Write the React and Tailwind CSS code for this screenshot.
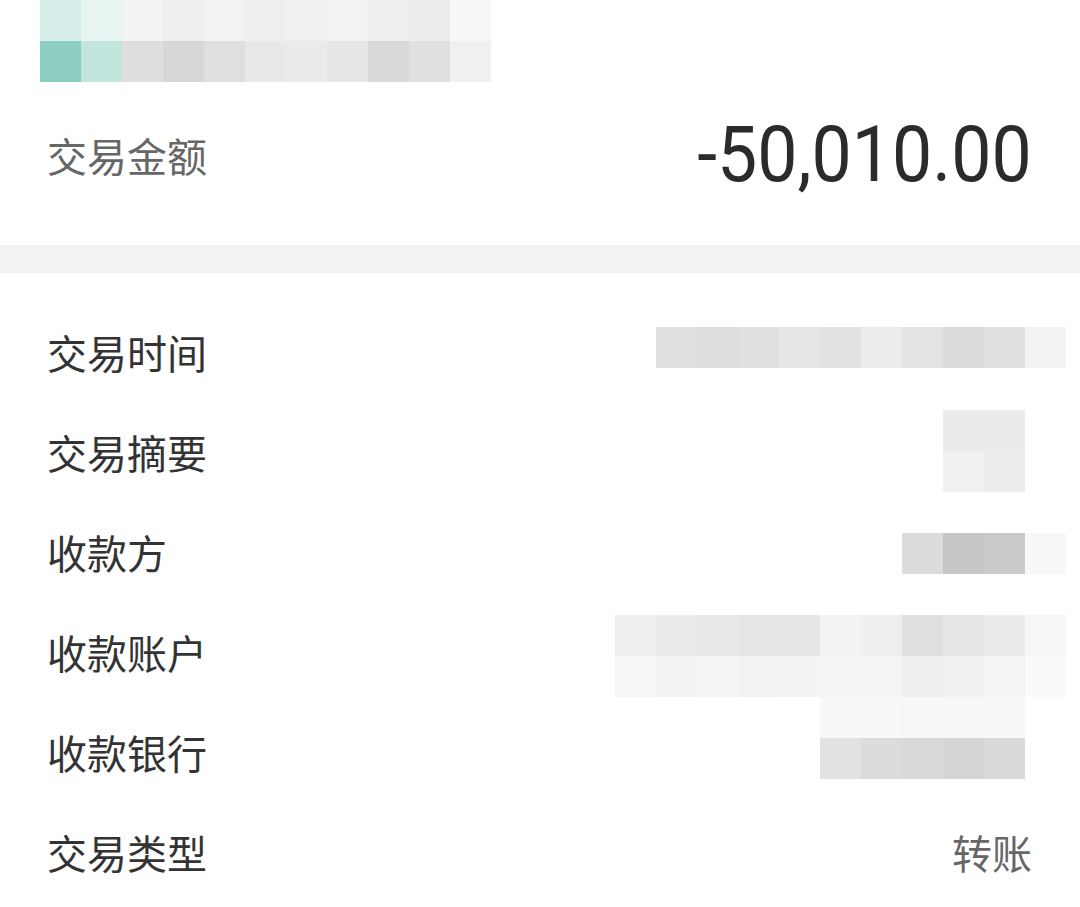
import React from 'react';

const CJK = "font-['Noto_Sans_CJK_SC','Noto_Sans',sans-serif]";

// mosaic rows for the blurred values, 41px cells
const headMosaic = [
  ['#d6eee9', '#e7f4f1', '#f3f3f3', '#eeeeee', '#f2f2f2', '#efefef', '#f0f0f0', '#f3f3f3', '#efefef', '#ececec', '#f8f8f8'],
  ['#8ccfc0', '#c2e5de', '#dedede', '#d7d7d7', '#dfdfdf', '#e8e8e8', '#ebebeb', '#e6e6e6', '#d9d9d9', '#e0e0e0', '#f1f1f1'],
];

const rows = [
  {
    label: '交易时间',
    mt: 'mt-[25px]',
    cells: [['#e0e0e0', '#dddddd', '#e0e0e0', '#e6e6e6', '#e2e2e2', '#ececec', '#e3e3e3', '#dcdcdc', '#e0e0e0', '#f3f3f3']],
  },
  {
    label: '交易摘要',
    mt: 'mt-[8px]',
    cells: [
      ['#ebebeb', '#ebebeb', '#ffffff'],
      ['#f1f1f1', '#ededed', '#ffffff'],
    ],
  },
  {
    label: '收款方',
    mt: 'mt-[31px]',
    cells: [['#dcdcdc', '#c6c6c6', '#cacaca', '#f8f8f8']],
  },
  {
    label: '收款账户',
    mt: 'mt-[13px]',
    cells: [
      ['#eeeeee', '#ebebeb', '#e9e9e9', '#e6e6e6', '#e7e7e7', '#f3f3f3', '#efefef', '#dfdfdf', '#e7e7e7', '#ebebeb', '#f6f6f6'],
      ['#f6f6f6', '#f3f3f3', '#f4f4f4', '#f2f2f2', '#f3f3f3', '#f5f5f5', '#f5f5f5', '#efefef', '#f1f1f1', '#f4f4f4', '#fafafa'],
    ],
  },
  {
    label: '收款银行',
    mt: 'mt-[-5px]',
    cells: [
      ['#f8f8f8', '#f8f8f8', '#f7f7f7', '#f7f7f7', '#f8f8f8', '#ffffff'],
      ['#e2e2e2', '#dcdcdc', '#d9d9d9', '#d5d5d5', '#dadada', '#ffffff'],
    ],
  },
];

function Mosaic({ cells, className = '' }) {
  return (
    <div className={`flex flex-col blur-[0.6px] ${className}`}>
      {cells.map((line, i) => (
        <div key={i} className="flex">
          {line.map((c, j) => (
            <div key={j} className="w-[41px] h-[41px]" style={{ backgroundColor: c }} />
          ))}
        </div>
      ))}
    </div>
  );
}

export default function App() {
  return (
    <div className={`w-[1080px] h-[907px] bg-white overflow-hidden ${CJK}`}>
      {/* head */}
      <div className="h-[245px]">
        <Mosaic cells={headMosaic} className="pl-[40px]" />
        <div className="h-[146px] flex items-center justify-between pl-[47px] pr-[48px]">
          <span className="text-[40px] leading-none text-[#666666]">交易金额</span>
          <span className="inline-block font-['Roboto',sans-serif] text-[77px] leading-none text-[#2b2b2b] scale-x-[0.93] origin-right">
            -50,010.00
          </span>
        </div>
      </div>

      <div className="h-[28px] bg-[#f2f2f2]" />

      {/* detail rows */}
      <div className="pt-[29px]">
        {rows.map((r) => (
          <div key={r.label} className="h-[100px] flex justify-between pl-[47px] pr-[14px]">
            <span className="self-center text-[40px] leading-none text-[#333333]">{r.label}</span>
            <Mosaic cells={r.cells} className={`self-start ${r.mt}`} />
          </div>
        ))}
        <div className="h-[100px] flex items-center justify-between pl-[47px] pr-[48px]">
          <span className="text-[40px] leading-none text-[#333333]">交易类型</span>
          <span className="text-[40px] leading-none text-[#666666]">转账</span>
        </div>
      </div>
    </div>
  );
}
